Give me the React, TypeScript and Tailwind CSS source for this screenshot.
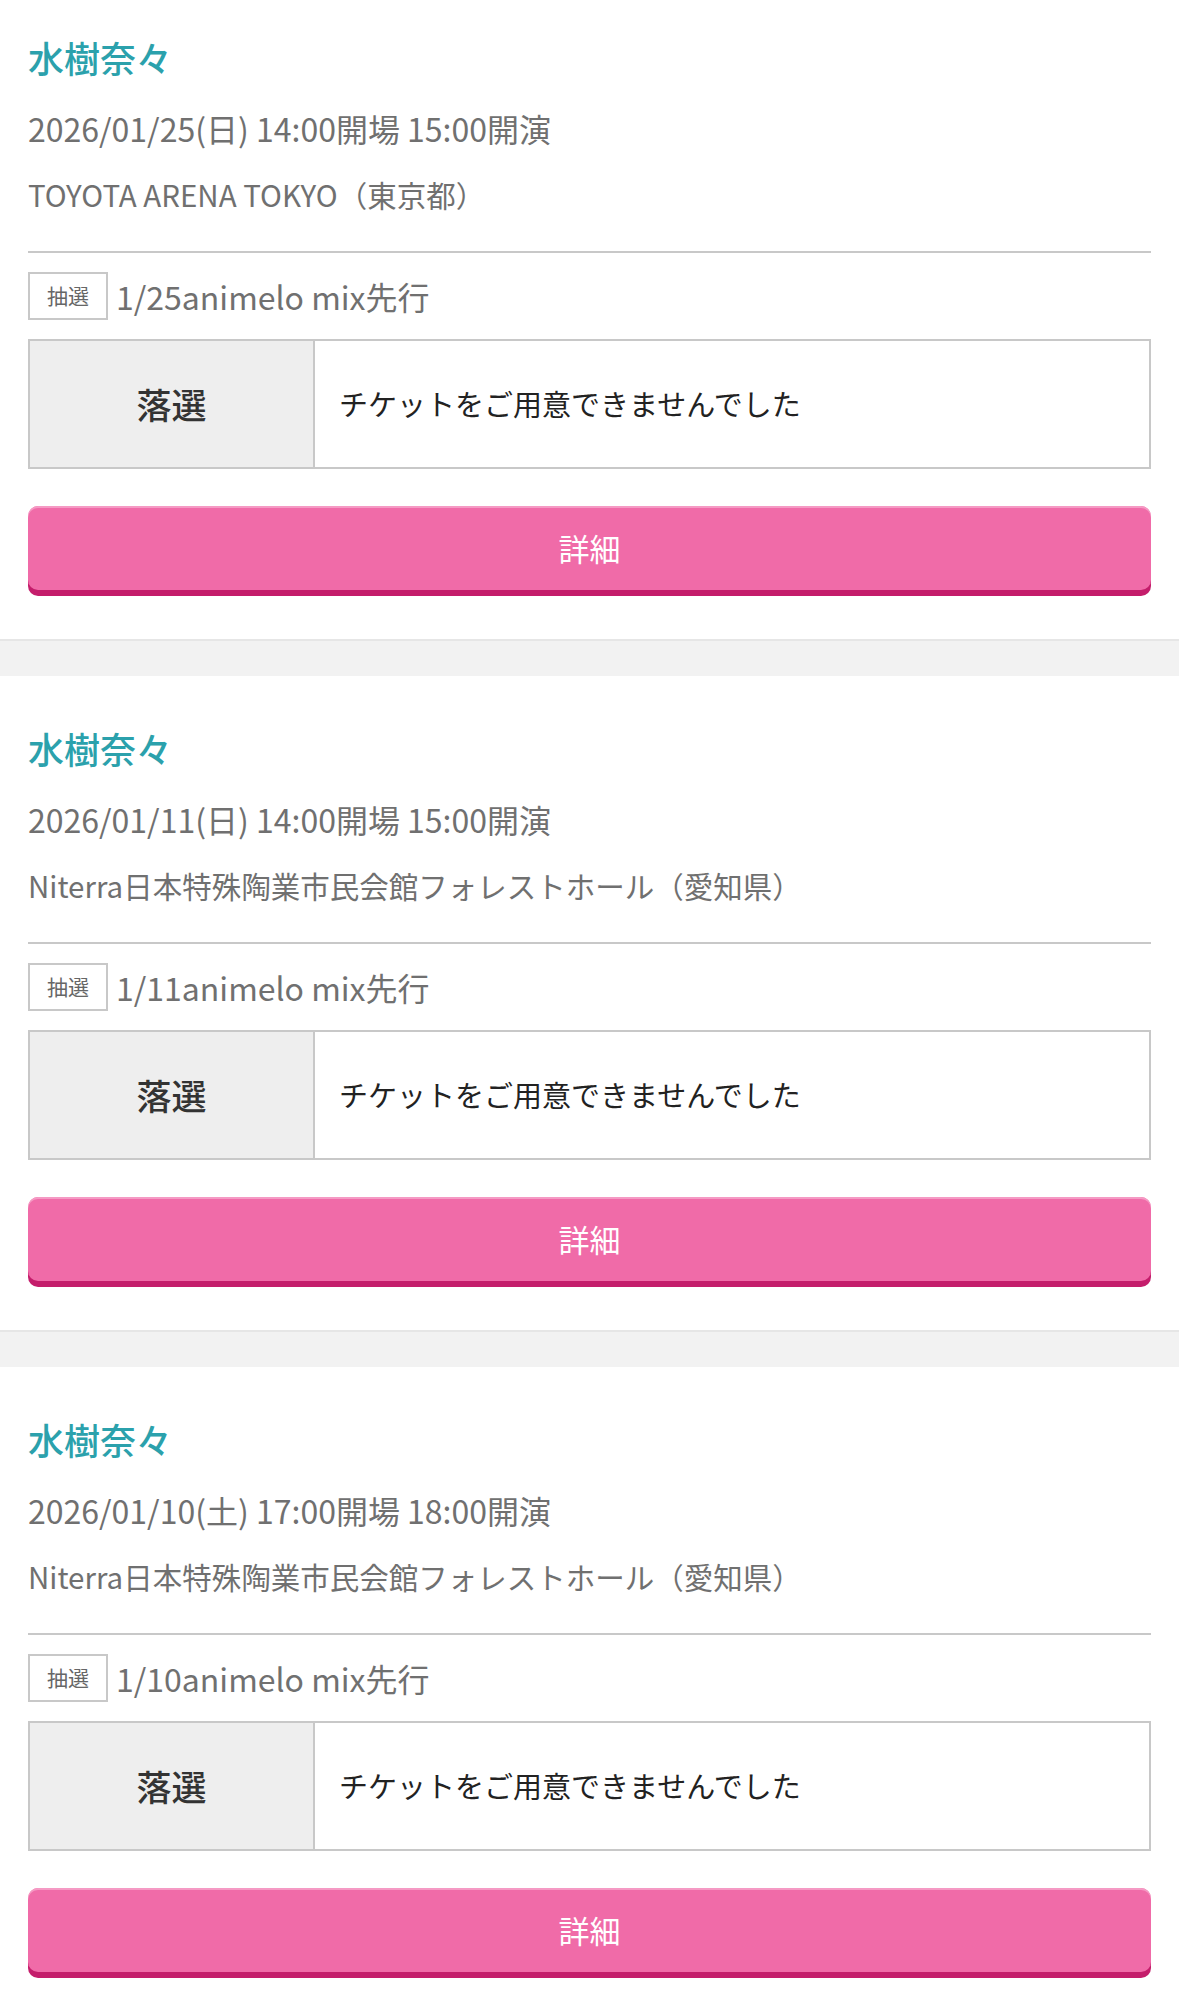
const FONT = { fontFamily: '"Noto Sans CJK JP", "Noto Sans", sans-serif' }

const events = [
  {
    id: 1,
    artist: '水樹奈々',
    date: '2026/01/25(日) 14:00開場 15:00開演',
    venue: 'TOYOTA ARENA TOKYO（東京都）',
    sale: '1/25animelo mix先行',
  },
  {
    id: 2,
    artist: '水樹奈々',
    date: '2026/01/11(日) 14:00開場 15:00開演',
    venue: 'Niterra日本特殊陶業市民会館フォレストホール（愛知県）',
    sale: '1/11animelo mix先行',
  },
  {
    id: 3,
    artist: '水樹奈々',
    date: '2026/01/10(土) 17:00開場 18:00開演',
    venue: 'Niterra日本特殊陶業市民会館フォレストホール（愛知県）',
    sale: '1/10animelo mix先行',
  },
]

export default function App() {
  return (
    <div className="w-[1179px] h-[2015px] overflow-hidden bg-white" style={FONT}>
      <div className="-mt-[15px]">
        {events.map((ev) => (
          <div key={ev.id}>
            <div className="bg-white px-[28px] pt-[47px] pb-[49px] border-b-2 border-[#e6e6e6]">
              <h2 className="text-[36px] leading-[50px] font-medium text-[#2ba1ac]">{ev.artist}</h2>
              <p className="mt-[22px] text-[32px] leading-[48px] text-[#707070]">{ev.date}</p>
              <p className="mt-[18px] text-[29.5px] leading-[48px] text-[#707070]">{ev.venue}</p>

              <div className="mt-[33px] border-t-2 border-[#c8c8c8]" />

              <div className="mt-[19px] flex items-center h-[48px]">
                <span className="w-[80px] h-[48px] border-2 border-[#c8c8c8] flex items-center justify-center text-[21px] text-[#666]">
                  抽選
                </span>
                <span className="ml-[8px] text-[32px] leading-[48px] text-[#707070]">{ev.sale}</span>
              </div>

              <div className="mt-[19px] flex h-[130px] border-2 border-[#c8c8c8]">
                <div className="w-[285px] bg-[#eeeeee] border-r-2 border-[#c8c8c8] flex items-center justify-center text-[35px] font-medium text-[#333]">
                  落選
                </div>
                <div className="flex-1 flex items-center pl-[24px] text-[29px] text-[#222]">
                  チケットをご用意できませんでした
                </div>
              </div>

              <button
                className="mt-[37px] w-full h-[84px] rounded-[10px] bg-[#f06ba8] text-white text-[31px] shadow-[0_6px_0_#c41d6b,inset_0_2px_0_#f59ac4] flex items-center justify-center"
                style={FONT}
              >
                詳細
              </button>
            </div>
            <div className="h-[35px] bg-[#f2f2f2]" />
          </div>
        ))}
      </div>
    </div>
  )
}
